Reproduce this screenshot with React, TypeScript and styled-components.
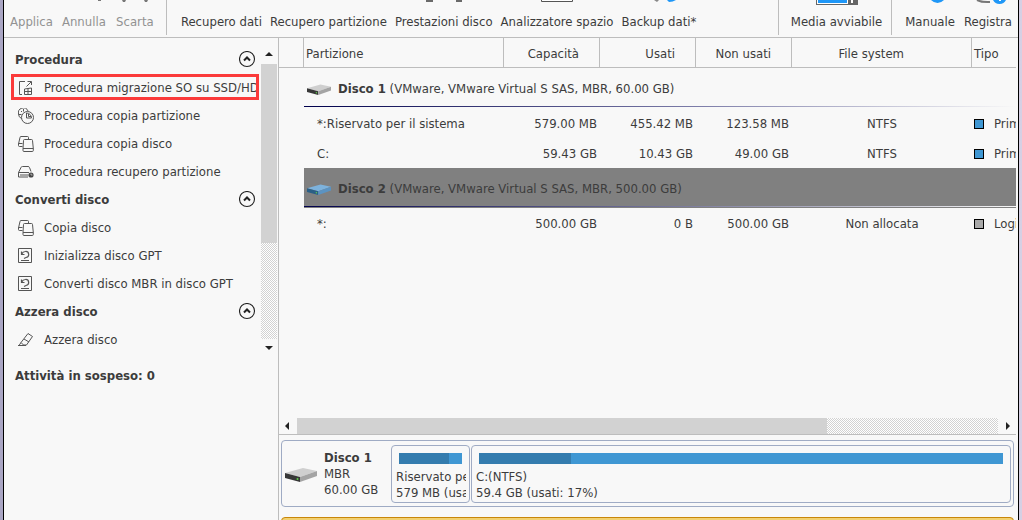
import React from "react";
import styled, { createGlobalStyle, css } from "styled-components";

const ink = "#3c3c3c";
const paper = "#f8f8f8";
const rule = "#bdbdbd";
const scroll = "#d2d2d2";

const GlobalStyle = createGlobalStyle`
  *, *::before, *::after { box-sizing: border-box; }
  html, body { margin: 0; height: 100%; overflow: hidden; }
  #root { height: 100%; }
  body, button {
    font-family: "DejaVu Sans Condensed", "DejaVu Sans", Tahoma, sans-serif;
    font-stretch: condensed;
    font-size: 13px;
    line-height: 16px;
    color: ${ink};
  }
  button { margin: 0; padding: 0; border: 0; background: none; white-space: nowrap; }
  svg { display: block; flex: none; }
`;

const Frame = styled.div`
  height: 100vh;
  padding: 0 3px;
  background: linear-gradient(to right, #aaa6c4, #d6d0e4);
`;

const Window = styled.div`
  display: flex;
  flex-direction: column;
  height: 100%;
  overflow: hidden;
  background: ${paper};
  border: solid #000;
  border-width: 0 1px;
`;

const Toolbar = styled.header`
  display: flex;
  flex: none;
  height: 38px;
  border-bottom: 1px solid ${rule};
`;

const ToolGroup = styled.div`
  display: flex;
  flex: none;
  gap: 9px;
  height: 35px;
  padding: 0 11px 0 6px;
  border-right: 1px solid ${rule};
`;

const MainTools = styled(ToolGroup)`
  flex: 1 1 auto;
  gap: 8px;
  padding-left: 14px;
`;

const MediaGroup = styled(ToolGroup)`
  padding: 0 9px 0 12px;
`;

const HelpGroup = styled(ToolGroup)`
  padding: 0 6px 0 13px;
  border-right: 0;
`;

const ToolButton = styled.button`
  display: flex;
  flex-direction: column;
  align-items: center;
  gap: 6px;
  height: 35px;
  &:disabled { color: #929292; }
`;

const Body = styled.div`
  display: flex;
  flex: 1;
  min-height: 0;
`;

const Sidebar = styled.aside`
  flex: none;
  width: 275px;
  border-right: 1px solid ${rule};
`;

const SideScroll = styled.div`
  display: flex;
  height: 317px;
`;

const SideList = styled.nav`
  flex: 1;
  min-width: 0;
  padding-top: 7px;
`;

const SectionHead = styled.div`
  display: flex;
  align-items: center;
  justify-content: space-between;
  height: 28px;
  padding: 0 5px 0 11px;
`;

const SectionTitle = styled.h2`
  margin: 0;
  padding-top: 2px;
  font-size: 13px;
  line-height: 16px;
  font-weight: bold;
`;

const Item = styled.button<{ $marked?: boolean }>`
  position: relative;
  display: flex;
  align-items: center;
  gap: 10px;
  width: 100%;
  height: 28px;
  padding: 2px 4px 0 14px;
  text-align: left;
  ${(p) =>
    p.$marked &&
    css`
      &::after {
        content: "";
        position: absolute;
        inset: 1px 2px 1px 7px;
        border: 3px solid #fb3a3a;
      }
    `}
`;

const ItemLabel = styled.span`
  flex: 1;
  min-width: 0;
`;

const Pending = styled.p`
  margin: 13px 0 0 11px;
  font-weight: bold;
`;

const VScroll = styled.div`
  display: flex;
  flex-direction: column;
  width: 17px;
  padding: 0 1px 0 0;
`;

const HScroll = styled.div`
  display: flex;
  height: 17px;
  border-bottom: 1px solid ${rule};
`;

const ScrollButton = styled.button`
  display: flex;
  align-items: center;
  justify-content: center;
  flex: none;
  width: 18px;
  height: 16px;
`;

const ScrollUp = styled(ScrollButton)`
  align-items: flex-end;
  width: 16px;
  height: 26px;
  padding-bottom: 6px;
`;

const ScrollDown = styled(ScrollButton)`
  width: 16px;
`;

const ScrollTrack = styled.div`
  display: flex;
  flex: 1;
  min-height: 0;
  background: repeating-conic-gradient(${scroll} 0 25%, #fff 0 50%) 0 0 / 2px 2px;
`;

const ScrollThumb = styled.div<{ $vertical?: boolean }>`
  width: ${(p) => (p.$vertical ? "100%" : "75.6%")};
  height: ${(p) => (p.$vertical ? "65%" : "100%")};
  background: ${scroll};
`;

const Main = styled.main`
  display: flex;
  flex: 1;
  flex-direction: column;
  min-width: 0;
  padding-right: 2px;
`;

const TableArea = styled.div`
  flex: none;
  height: 380px;
  overflow: hidden;
`;

const Table = styled.table`
  width: 100%;
  table-layout: fixed;
  border-collapse: separate;
  border-spacing: 0;
`;

const HeadCell = styled.th<{ $pad?: number }>`
  height: 30px;
  padding: 2px ${(p) => p.$pad ?? 2}px 0 2px;
  border-right: 1px solid ${rule};
  border-bottom: 1px solid ${rule};
  font-weight: normal;
  text-align: ${(p) => (p.$pad ? "right" : "left")};
  white-space: nowrap;
  overflow: hidden;
  &:last-child { border-right: 0; }
`;

const Cell = styled.td<{ $align?: "left" | "right" | "center" }>`
  height: 30px;
  padding: 2px ${(p) => (p.$align === "right" ? 3 : 2)}px 0 2px;
  text-align: ${(p) => p.$align ?? "left"};
  white-space: nowrap;
  overflow: hidden;
`;

const NameCell = styled(Cell)`
  padding-left: 13px;
`;

const TypeLabel = styled.div`
  display: flex;
  align-items: center;
  gap: 10px;
`;

const Swatch = styled.span<{ $color: string }>`
  flex: none;
  width: 10px;
  height: 10px;
  border: 1px solid #000;
  background: ${(p) => p.$color};
`;

const DiskCell = styled.td<{ $selected?: boolean }>`
  height: 40px;
  padding: 0 0 1px;
  background: ${(p) => (p.$selected ? "#808080" : "transparent")};
`;

const DiskLine = styled.div`
  display: flex;
  align-items: center;
  gap: 7px;
  height: 38px;
  padding: 3px 0 0 3px;
  white-space: nowrap;
`;

const DiskRule = styled.div<{ $selected?: boolean }>`
  height: 1px;
  background: linear-gradient(to right, #00004c, ${(p) => (p.$selected ? "#8080a0 55%" : "#7c7ca8 55%")}, ${paper});
`;

const MapArea = styled.section`
  display: flex;
  flex: 1;
  flex-direction: column;
  gap: 10px;
  min-height: 0;
  padding: 5px 2px 0;
  overflow: hidden;
`;

const DiskCard = styled.div`
  display: flex;
  flex: none;
  gap: 1px;
  height: 67px;
  padding: 4px 2px 3px;
  border: 1px solid #9fabc4;
  border-radius: 4px;
`;

const NextDiskCard = styled.div`
  flex: none;
  height: 67px;
  border: 1px solid #c8860a;
  border-radius: 4px;
  background: #f2d070;
`;

const DiskSummary = styled.div`
  display: flex;
  align-items: center;
  gap: 7px;
  width: 106px;
  padding-left: 1px;
`;

const Lines = styled.div`
  white-space: nowrap;
`;

const PartitionBox = styled.div<{ $width?: number }>`
  flex: ${(p) => (p.$width ? `none` : "1")};
  width: ${(p) => (p.$width ? `${p.$width}px` : "auto")};
  min-width: 0;
  padding: 7px 3px 0 4px;
  border: 1px solid #9fabc4;
  border-radius: 4px;
  overflow: hidden;
`;

const UsageBar = styled.div`
  height: 11px;
  margin: 0 4px 5px 3px;
  background: #3f97d3;
`;

const Used = styled.div`
  height: 100%;
  background: #347cae;
`;

const Clip = styled.div`
  overflow: hidden;
  white-space: nowrap;
`;

const Glyph = ({ children }: { children: React.ReactNode }) => (
  <svg width="16" height="16" viewBox="0 0 16 16" fill="none" stroke="#555" strokeWidth="1" aria-hidden="true">
    {children}
  </svg>
);

const MigrateIcon = () => (
  <Glyph>
    <path d="M7 1.500H1.500v13H4M8.500 6.500L13 2M9.500 1.500h4V5" />
    <path d="M6.500 9l7-1v6.500h-7zM10 8.500v6M6.500 11.500h7" />
  </Glyph>
);

const CopyPartitionIcon = () => (
  <Glyph>
    <path d="M3.500 10.500A5 5 0 0 1 .5 6a5 5 0 0 1 9.500-3M1 6.500H3.500M5.500 1v2.500M3 3l1 1" />
    <circle cx="9.500" cy="9.500" r="6" />
    <path d="M8.500 5v5h5A5 5 0 0 0 8.500 5zM10.500 6V8.500H13" />
  </Glyph>
);

const CopyDiskIcon = () => (
  <Glyph>
    <path d="M4.500 10.500H1.500a1 1 0 0 1-1-1V8L2 1.500a1 1 0 0 1 1-1H9.500a1 1 0 0 1 1 1V3M.5 7.500h4" />
    <path d="M6.500 3.500H13.500a1 1 0 0 1 1 1l.8 8v2a1 1 0 0 1-1 1H6a1 1 0 0 1-1-1v-2l.5-8a1 1 0 0 1 1-1zM5 12.500H15.500" />
  </Glyph>
);

const RecoverIcon = () => (
  <Glyph>
    <path d="M.5 8.500L3 3.500Q3.300 2.500 4.500 2.500H10q1.200 0 1.500 1L13 7.500M.500 8.500V13H10M.500 8.500H11M3 10v2M5 10v2M7 10v2M9 10v2" />
    <circle cx="13" cy="11" r="2.600" fill="#444" stroke="none" />
    <path d="M13 9.500V11h1.500" stroke="#ddd" strokeWidth=".7" />
  </Glyph>
);

const ConvertIcon = () => (
  <Glyph>
    <path d="M.5 .5h13v14H.5zM3 12.500h8" />
    <path d="M3.500 3.500v3h3M3.800 6Q5 3.500 7.300 3.500A3 3 0 0 1 8 9.500L6 10.500" strokeWidth="1.200" />
  </Glyph>
);

const EraserIcon = () => (
  <Glyph>
    <path d="M10 1.500L14.500 4.500 8.500 13H5.500L3 10.500zM6 7l5 3M0 13.500h8M3 10.500L1 13.500" />
  </Glyph>
);

const Collapse = ({ label }: { label: string }) => (
  <button type="button" aria-label={`Comprimi ${label}`}>
    <svg width="17" height="17" viewBox="0 0 17 17" fill="none" stroke="#222">
      <circle cx="8" cy="8" r="7.500" strokeWidth="1.100" />
      <path d="M5 9.500l3-3 3 3" strokeWidth="2" />
    </svg>
  </button>
);

const DriveIcon = ({ size, blue }: { size: number; blue?: boolean }) => (
  <svg width={size} height={size / 2} viewBox="0 0 32 16" aria-hidden="true">
    <path d="M0 7L18 2l14 3-17 6z" fill={blue ? "#7db2dc" : "#cfcfcf"} />
    <path d="M0 7l15 4v5L0 12z" fill={blue ? "#2a5f86" : "#383838"} />
    <path d="M15 11l17-6v5l-17 6z" fill={blue ? "#5b93c2" : "#a4a4a4"} />
    <circle cx="12.500" cy="13" r="1" fill="#5fd04a" />
  </svg>
);

const Arrow = ({ d }: { d: string }) => (
  <svg width="8" height="8" viewBox="0 0 8 8" fill="#222" aria-hidden="true">
    <path d={d} />
  </svg>
);

const ToolGlyph = ({ width = 40, children }: { width?: number; children?: React.ReactNode }) => (
  <svg width={width} height="8" viewBox={`0 0 ${width} 8`} aria-hidden="true">
    {children}
  </svg>
);

const sections = [
  {
    title: "Procedura",
    items: [
      { label: "Procedura migrazione SO su SSD/HD", Icon: MigrateIcon, marked: true },
      { label: "Procedura copia partizione", Icon: CopyPartitionIcon },
      { label: "Procedura copia disco", Icon: CopyDiskIcon },
      { label: "Procedura recupero partizione", Icon: RecoverIcon },
    ],
  },
  {
    title: "Converti disco",
    items: [
      { label: "Copia disco", Icon: CopyDiskIcon },
      { label: "Inizializza disco GPT", Icon: ConvertIcon },
      { label: "Converti disco MBR in disco GPT", Icon: ConvertIcon },
    ],
  },
  { title: "Azzera disco", items: [{ label: "Azzera disco", Icon: EraserIcon }] },
] as { title: string; items: { label: string; Icon: React.FC; marked?: boolean }[] }[];

const disks = [
  {
    name: "Disco 1",
    info: "(VMware, VMware Virtual S SAS, MBR, 60.00 GB)",
    selected: false,
    rows: [
      ["*:Riservato per il sistema", "579.00 MB", "455.42 MB", "123.58 MB", "NTFS", "Prim", "#3f97d3"],
      ["C:", "59.43 GB", "10.43 GB", "49.00 GB", "NTFS", "Prim", "#3f97d3"],
    ],
  },
  {
    name: "Disco 2",
    info: "(VMware, VMware Virtual S SAS, MBR, 500.00 GB)",
    selected: true,
    rows: [["*:", "500.00 GB", "0 B", "500.00 GB", "Non allocata", "Logi", "#a9a9a9"]],
  },
];

export default function App() {
  return (
    <Frame>
      <GlobalStyle />
      <Window>
        <Toolbar>
          <ToolGroup>
            <ToolButton type="button" disabled>
              <ToolGlyph />
              Applica
            </ToolButton>
            <ToolButton type="button" disabled>
              <ToolGlyph>
                <path d="M34 0h3v1h-3z" fill="#777" />
              </ToolGlyph>
              Annulla
            </ToolButton>
            <ToolButton type="button" disabled>
              <ToolGlyph>
                <path d="M7 0h4l-1 2H8zM29 0h4l-1 2h-2z" fill="#777" />
              </ToolGlyph>
              Scarta
            </ToolButton>
          </ToolGroup>
          <MainTools>
            <ToolButton type="button">
              <ToolGlyph />
              Recupero dati
            </ToolButton>
            <ToolButton type="button">
              <ToolGlyph />
              Recupero partizione
            </ToolButton>
            <ToolButton type="button">
              <ToolGlyph>
                <path d="M2 0h7v2H2zM32 0h6v2h-6z" fill="#6a6a6a" />
              </ToolGlyph>
              Prestazioni disco
            </ToolButton>
            <ToolButton type="button">
              <ToolGlyph>
                <path d="M4.500 0v1.500h31V0" fill="#fff" stroke="#555" />
              </ToolGlyph>
              Analizzatore spazio
            </ToolButton>
            <ToolButton type="button">
              <ToolGlyph>
                <path d="M15 0h5l-2 2z" fill="#888" />
                <path d="M28 0h9q-3 2-7 2z" fill="#1f97f7" />
              </ToolGlyph>
              Backup dati*
            </ToolButton>
          </MainTools>
          <MediaGroup>
            <ToolButton type="button">
              <ToolGlyph width={42}>
                <path d="M0 0h42v5H0z" fill="#666" />
                <path d="M1 0h31v4H1z" fill="#fff" />
                <path d="M2 0h29v3H2z" fill="#1f97f7" />
                <path d="M35 0h2v3h-2z" fill="#fff" />
              </ToolGlyph>
              Media avviabile
            </ToolButton>
          </MediaGroup>
          <HelpGroup>
            <ToolButton type="button">
              <ToolGlyph>
                <path d="M21 0h13q-3 3-6.500 3T21 0z" fill="#1f97f7" />
              </ToolGlyph>
              Manuale
            </ToolButton>
            <ToolButton type="button">
              <ToolGlyph>
                <path d="M9 0q5 2.500 13 2" fill="none" stroke="#777" strokeWidth="2" />
                <path d="M25 0h13q-2 4-6.500 4T25 0z" fill="#1f97f7" />
                <path d="M31 0h2v1h-2z" fill="#fff" />
              </ToolGlyph>
              Registra
            </ToolButton>
          </HelpGroup>
        </Toolbar>
        <Body>
          <Sidebar>
            <SideScroll>
              <SideList>
                {sections.map((s) => (
                  <div key={s.title}>
                    <SectionHead>
                      <SectionTitle>{s.title}</SectionTitle>
                      <Collapse label={s.title} />
                    </SectionHead>
                    {s.items.map(({ label, Icon, marked }) => (
                      <Item key={label} type="button" $marked={marked}>
                        <Icon />
                        <ItemLabel>{label}</ItemLabel>
                      </Item>
                    ))}
                  </div>
                ))}
              </SideList>
              <VScroll>
                <ScrollUp type="button" aria-label="Scorri su">
                  <Arrow d="M0 6L4 2l4 4z" />
                </ScrollUp>
                <ScrollTrack>
                  <ScrollThumb $vertical />
                </ScrollTrack>
                <ScrollDown type="button" aria-label="Scorri giù">
                  <Arrow d="M0 3l4 4 4-4z" />
                </ScrollDown>
              </VScroll>
            </SideScroll>
            <Pending>Attività in sospeso: 0</Pending>
          </Sidebar>
          <Main>
            <TableArea>
              <Table>
                <colgroup>
                  <col style={{ width: 25 }} />
                  <col style={{ width: 200 }} />
                  <col style={{ width: 96 }} />
                  <col style={{ width: 96 }} />
                  <col style={{ width: 96 }} />
                  <col style={{ width: 180 }} />
                  <col />
                </colgroup>
                <thead>
                  <tr>
                    <HeadCell />
                    <HeadCell>Partizione</HeadCell>
                    <HeadCell $pad={20}>Capacità</HeadCell>
                    <HeadCell $pad={20}>Usati</HeadCell>
                    <HeadCell $pad={20}>Non usati</HeadCell>
                    <HeadCell $pad={67}>File system</HeadCell>
                    <HeadCell>Tipo</HeadCell>
                  </tr>
                </thead>
                {disks.map((d) => (
                  <tbody key={d.name}>
                    <tr>
                      <td />
                      <DiskCell colSpan={6} $selected={d.selected}>
                        <DiskLine>
                          <DriveIcon size={24} blue={d.selected} />
                          <span>
                            <b>{d.name}</b> {d.info}
                          </span>
                        </DiskLine>
                        <DiskRule $selected={d.selected} />
                      </DiskCell>
                    </tr>
                    {d.rows.map(([name, size, used, free, fs, type, color]) => (
                      <tr key={name}>
                        <td />
                        <NameCell>{name}</NameCell>
                        <Cell $align="right">{size}</Cell>
                        <Cell $align="right">{used}</Cell>
                        <Cell $align="right">{free}</Cell>
                        <Cell $align="center">{fs}</Cell>
                        <Cell>
                          <TypeLabel>
                            <Swatch $color={color} />
                            {type}
                          </TypeLabel>
                        </Cell>
                      </tr>
                    ))}
                  </tbody>
                ))}
              </Table>
            </TableArea>
            <HScroll>
              <ScrollButton type="button" aria-label="Scorri a sinistra">
                <Arrow d="M5 0v8L1 4z" />
              </ScrollButton>
              <ScrollTrack>
                <ScrollThumb />
              </ScrollTrack>
              <ScrollButton type="button" aria-label="Scorri a destra">
                <Arrow d="M3 0v8l4-4z" />
              </ScrollButton>
            </HScroll>
            <MapArea>
              <DiskCard>
                <DiskSummary>
                  <DriveIcon size={32} />
                  <Lines>
                    <div>
                      <b>Disco 1</b>
                    </div>
                    <div>MBR</div>
                    <div>60.00 GB</div>
                  </Lines>
                </DiskSummary>
                <PartitionBox $width={79}>
                  <UsageBar>
                    <Used style={{ width: "79%" }} />
                  </UsageBar>
                  <Clip>Riservato pe</Clip>
                  <Clip>579 MB (usa</Clip>
                </PartitionBox>
                <PartitionBox>
                  <UsageBar>
                    <Used style={{ width: "17.5%" }} />
                  </UsageBar>
                  <Clip>C:(NTFS)</Clip>
                  <Clip>59.4 GB (usati: 17%)</Clip>
                </PartitionBox>
              </DiskCard>
              <NextDiskCard />
            </MapArea>
          </Main>
        </Body>
      </Window>
    </Frame>
  );
}
